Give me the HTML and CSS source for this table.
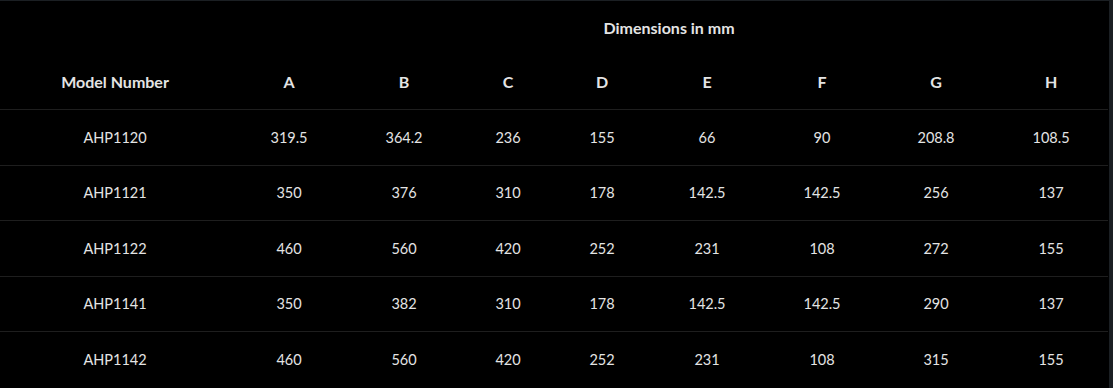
FILE: index.html
```html
<!DOCTYPE html>
<html lang="en">
<head>
<meta charset="utf-8">
<title>Dimensions</title>
<link rel="stylesheet" href="styles.css">
</head>
<body>
<div class="frame">
<table class="spec">
  <colgroup>
    <col class="c-model"><col class="c-a"><col class="c-b"><col class="c-c"><col class="c-d"><col class="c-e"><col class="c-f"><col class="c-g"><col class="c-h">
  </colgroup>
  <thead>
    <tr class="head-top">
      <th></th>
      <th colspan="8">Dimensions in mm</th>
    </tr>
    <tr class="head-cols">
      <th>Model Number</th><th>A</th><th>B</th><th>C</th><th>D</th><th>E</th><th>F</th><th>G</th><th>H</th>
    </tr>
  </thead>
  <tbody>
    <tr><td>AHP1120</td><td>319.5</td><td>364.2</td><td>236</td><td>155</td><td>66</td><td>90</td><td>208.8</td><td>108.5</td></tr>
    <tr><td>AHP1121</td><td>350</td><td>376</td><td>310</td><td>178</td><td>142.5</td><td>142.5</td><td>256</td><td>137</td></tr>
    <tr><td>AHP1122</td><td>460</td><td>560</td><td>420</td><td>252</td><td>231</td><td>108</td><td>272</td><td>155</td></tr>
    <tr><td>AHP1141</td><td>350</td><td>382</td><td>310</td><td>178</td><td>142.5</td><td>142.5</td><td>290</td><td>137</td></tr>
    <tr><td>AHP1142</td><td>460</td><td>560</td><td>420</td><td>252</td><td>231</td><td>108</td><td>315</td><td>155</td></tr>
  </tbody>
</table>
</div>
</body>
</html>
```
FILE: styles.css
```css
html, body {
  margin: 0;
  padding: 0;
  background: #1b1f23;
  height: 100%;
  overflow: hidden;
}
.frame {
  width: 1109px;
  background: #000;
  height: 100%;
  box-sizing: border-box;
  border-top: 1px solid #1b1f23;
}
.spec {
  width: 1108px;
  border-collapse: collapse;
  table-layout: fixed;
  background: #000;
  color: #e4e4e4;
  font-family: "Lato", "Liberation Sans", sans-serif;
}
.c-model { width: 230px; }
.c-a { width: 118px; }
.c-b { width: 112px; }
.c-c { width: 96px; }
.c-d { width: 92px; }
.c-e { width: 118px; }
.c-f { width: 112px; }
.c-g { width: 116px; }
.c-h { width: 114px; }
.spec th, .spec td {
  text-align: center;
  padding: 0;
  vertical-align: middle;
}
.spec th {
  font-weight: 700;
  font-size: 16px;
}
.head-top th {
  height: 52px;
}
.head-cols th {
  height: 56px;
  border-bottom: 1px solid #1e1e1e;
}
.spec td {
  height: 54.5px;
  font-size: 14.5px;
  border-bottom: 1px solid #1e1e1e;
}
.spec tbody tr:last-child td {
  border-bottom: none;
}
```
